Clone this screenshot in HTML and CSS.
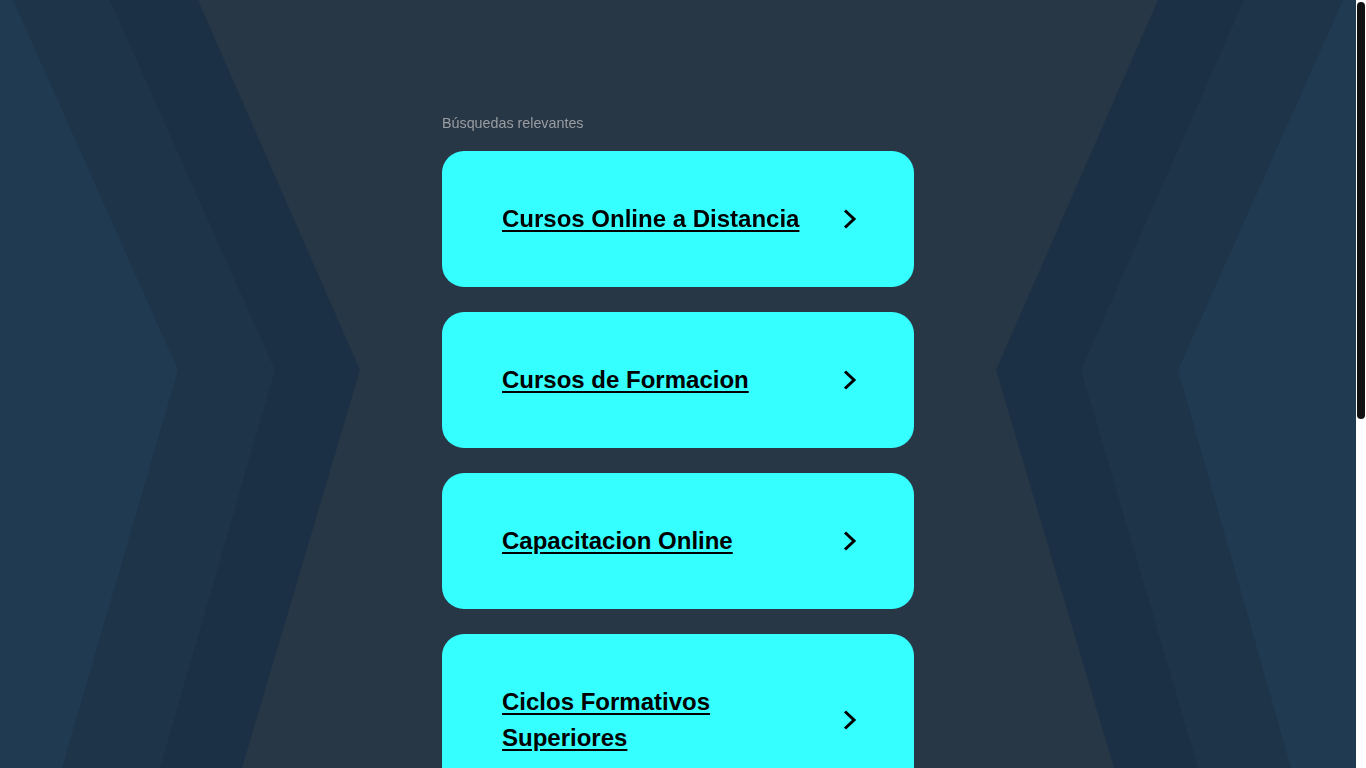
FILE: index.html
```html
<!DOCTYPE html>
<html lang="es">
<head>
<meta charset="utf-8">
<title>Búsquedas relevantes</title>
<link rel="stylesheet" href="styles.css">
</head>
<body>
<div class="backdrop" aria-hidden="true">
  <svg class="backdrop-svg" viewBox="0 0 1356 768" preserveAspectRatio="none">
    <polygon class="band-c" points="0,0 198,0 360,370 242,768 0,768"/>
    <polygon class="band-b" points="0,0 110,0 275,370 160,768 0,768"/>
    <polygon class="band-a" points="0,0 13,0 178,370 62,768 0,768"/>
    <polygon class="band-c" points="1356,0 1158,0 996,370 1114,768 1356,768"/>
    <polygon class="band-b" points="1356,0 1244,0 1081,370 1198,768 1356,768"/>
    <polygon class="band-a" points="1356,0 1343,0 1178,370 1291,768 1356,768"/>
  </svg>
</div>
<div class="scrollbar" aria-hidden="true"><div class="scrollbar-thumb"></div></div>
<main class="page">
  <section class="related">
    <p class="related-title">Búsquedas relevantes</p>
    <ul class="link-list">
      <li class="link-card">
        <a class="link-text" href="#">Cursos Online a Distancia</a>
        <svg class="chevron" viewBox="0 0 14 22"><polyline points="2,2.5 11,11 2,19.5"/></svg>
      </li>
      <li class="link-card">
        <a class="link-text" href="#">Cursos de Formacion</a>
        <svg class="chevron" viewBox="0 0 14 22"><polyline points="2,2.5 11,11 2,19.5"/></svg>
      </li>
      <li class="link-card">
        <a class="link-text" href="#">Capacitacion Online</a>
        <svg class="chevron" viewBox="0 0 14 22"><polyline points="2,2.5 11,11 2,19.5"/></svg>
      </li>
      <li class="link-card">
        <a class="link-text" href="#">Ciclos Formativos Superiores</a>
        <svg class="chevron" viewBox="0 0 14 22"><polyline points="2,2.5 11,11 2,19.5"/></svg>
      </li>
      <li class="link-card">
        <a class="link-text" href="#">Cursos Gratuitos</a>
        <svg class="chevron" viewBox="0 0 14 22"><polyline points="2,2.5 11,11 2,19.5"/></svg>
      </li>
    </ul>
  </section>
</main>
</body>
</html>
```

FILE: styles.css
```css
html {
  background: #283746;
}
body {
  margin: 0 10px 0 0;
  font-family: "Liberation Sans", Arial, sans-serif;
  color: #000;
}
.backdrop {
  position: fixed;
  top: 0;
  left: 0;
  right: 10px;
  bottom: 0;
  z-index: 0;
}
.backdrop-svg {
  display: block;
  width: 100%;
  height: 100%;
}
.band-a { fill: #203a51; }
.band-b { fill: #1e3449; }
.band-c { fill: #1b3045; }

.scrollbar {
  position: fixed;
  top: 0;
  right: 0;
  bottom: 0;
  width: 10px;
  background: #ffffff;
  z-index: 2;
}
.scrollbar-thumb {
  margin: 2px 0 0 1px;
  width: 8px;
  height: 417px;
  background: #111111;
  border-radius: 4px;
}

.page {
  position: relative;
  z-index: 1;
  padding: 113px 0 420px;
}
.related {
  width: 472px;
  margin: 0 auto;
}
.related-title {
  margin: 0 0 18px;
  font-size: 14.3px;
  line-height: 20px;
  color: #9a9da2;
}
.link-list {
  list-style: none;
  margin: 0;
  padding: 0;
  display: flex;
  flex-direction: column;
  gap: 25px;
}
.link-card {
  display: flex;
  align-items: center;
  gap: 30px;
  padding: 50px 57px 50px 60px;
  background: #36ffff;
  border-radius: 22px;
}
.link-text {
  flex: 1;
  font-size: 24px;
  line-height: 36px;
  font-weight: bold;
  color: #000;
  text-decoration: underline;
  text-underline-offset: 3px;
  text-decoration-thickness: 2px;
}
.chevron {
  flex: none;
  width: 14px;
  height: 22px;
}
.chevron polyline {
  fill: none;
  stroke: #000;
  stroke-width: 3;
}
```
